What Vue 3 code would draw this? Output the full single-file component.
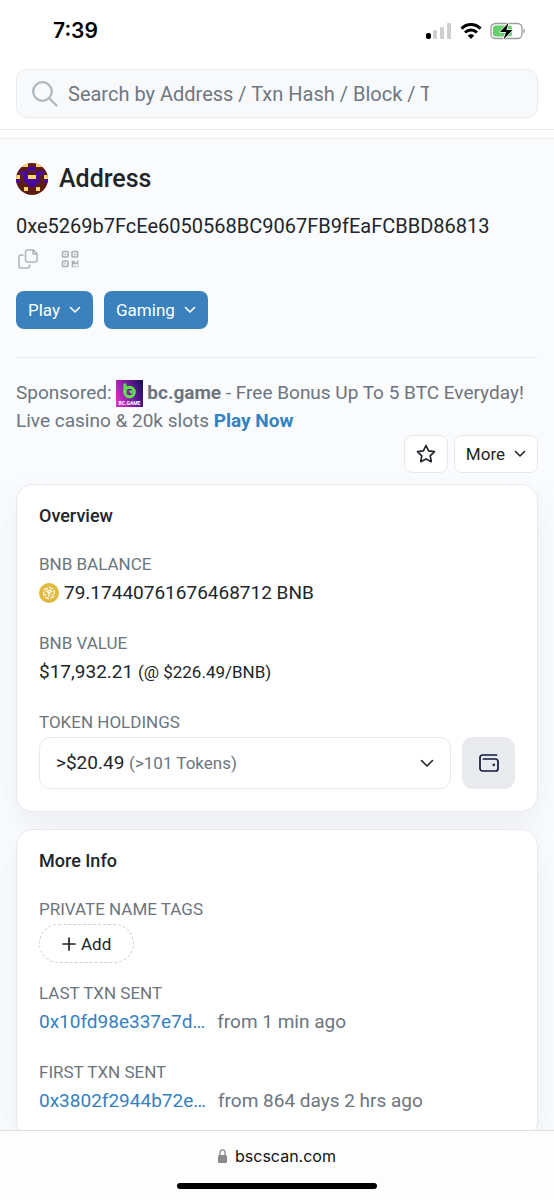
<script setup>
import { ref } from 'vue'

const query = ref('')
const tags = ['Play', 'Gaming']
const transactions = [
  { label: 'Last Txn Sent', hash: '0x10fd98e337e7d…', age: 'from 1 min ago' },
  { label: 'First Txn Sent', hash: '0x3802f2944b72e…', age: 'from 864 days 2 hrs ago' }
]

// 8x8 identicon: Y = yellow, P = purple, anything else is the brown ground
const rows = ['bYYbbYYb', 'bbbPPbbb', 'bPPbbPPb', 'YbPYYPbY', 'PbPPPPbP', 'bbbPPbbb', 'bbYbbYbb', 'bbbbbbbb']
const cells = rows.flatMap((row, y) =>
  [...row].map((c, x) => ({ c, x, y })).filter((cell) => cell.c !== 'b')
)
</script>

<template>
  <div class="screen">
    <header class="status">
      <time class="clock">7:39</time>
      <div class="indicators">
        <svg width="26" height="16" viewBox="0 0 26 16" aria-hidden="true">
          <rect x="0" y="10" width="5" height="6" rx="2" fill="#000" />
          <rect x="7" y="7" width="4" height="9" rx="1" fill="#cfcfcf" />
          <rect x="14" y="4" width="4" height="12" rx="1" fill="#cfcfcf" />
          <rect x="21" y="0" width="4" height="16" rx="1" fill="#cfcfcf" />
        </svg>
        <svg width="22" height="16" viewBox="0 0 22 16" aria-hidden="true">
          <g fill="none" stroke="#000" stroke-width="3">
            <path d="M1.500 5.600C7 .2 15 .2 20.500 5.600" />
            <path d="M5 9.500c3.500-3.300 8.500-3.300 12 0" />
          </g>
          <path d="M11 16l-3.300-3.400c1.900-1.700 4.700-1.700 6.600 0z" fill="#000" />
        </svg>
        <svg width="36" height="18" viewBox="0 0 36 18" aria-hidden="true">
          <rect x="1" y="1.500" width="31" height="15" rx="4.500" fill="#fff" stroke="#9c9c9c" stroke-width="1.300" />
          <rect x="3" y="3.500" width="19" height="11" rx="2.500" fill="#65cf6b" />
          <path d="M33.500 6.500c1.800.700 1.800 4.300 0 5z" fill="#8f8f8f" />
          <path d="M18.500 .8L10 10h6l-2.500 7.500L22.500 8h-6z" fill="#000" stroke="#fff" stroke-width="1.500" paint-order="stroke" stroke-linejoin="round" />
        </svg>
      </div>
    </header>

    <form class="search" role="search" @submit.prevent>
      <label class="search-box">
        <svg width="26" height="26" viewBox="0 0 26 26" fill="none" stroke="#adb5bd" stroke-width="2.200" stroke-linecap="round" aria-hidden="true">
          <circle cx="10.500" cy="10.500" r="9.300" />
          <path d="M17.500 17.500l7 7" />
        </svg>
        <input v-model="query" type="text" aria-label="Search" placeholder="Search by Address / Txn Hash / Block / Token" />
      </label>
    </form>

    <main class="page">
      <section class="intro">
        <div class="heading">
          <svg class="avatar" width="32" height="32" viewBox="0 0 8 8" shape-rendering="crispEdges" aria-hidden="true">
            <rect width="8" height="8" fill="#5e1c10" />
            <rect v-for="cell in cells" :key="`${cell.x}-${cell.y}`" :x="cell.x" :y="cell.y" width="1" height="1" :fill="cell.c === 'Y' ? '#f6d86b' : '#4a079e'" />
          </svg>
          <h1>Address</h1>
        </div>
        <p class="hash">0xe5269b7FcEe6050568BC9067FB9fEaFCBBD86813</p>
        <div class="tools">
          <button type="button" aria-label="Copy address">
            <svg width="20" height="20" viewBox="0 0 20 20" fill="none" stroke="#adb5bd" stroke-width="1.500" stroke-linejoin="round" stroke-linecap="round">
              <path d="M9.500 1h6L19 4.500V11a2 2 0 0 1-2 2H9.500a2 2 0 0 1-2-2V3a2 2 0 0 1 2-2zM15 1.200V5h3.800" />
              <path d="M5 6H3a2 2 0 0 0-2 2v9a2 2 0 0 0 2 2h6.500a2 2 0 0 0 2-2v-1" />
            </svg>
          </button>
          <button type="button" aria-label="View QR code">
            <svg width="18" height="18" viewBox="0 0 18 18" fill="none" stroke="#a9b0b8" stroke-width="1.700">
              <rect x="1.500" y="1.500" width="5.500" height="5.500" rx="1" />
              <rect x="11" y="1.500" width="5.500" height="5.500" rx="1" />
              <rect x="1.500" y="11" width="5.500" height="5.500" rx="1" />
              <path d="M3.500 4.300h1.500M13 4.300h1.500M3.500 13.700h1.500M11.500 17.500v-7M13 11v3M13 13.500h3M16.500 10.500v4M13.500 16.500h1.500M16 16.500h1.500" />
            </svg>
          </button>
        </div>
        <div class="tags">
          <button v-for="tag in tags" :key="tag" type="button" class="tag">
            {{ tag }}
            <svg class="chevron" width="12" height="8" viewBox="0 0 12 8"><path d="M1.500 1.500L6 6l4.500-4.500" /></svg>
          </button>
        </div>
      </section>

      <p class="sponsor">
        <span>Sponsored: </span>
        <svg class="ad" width="27" height="27" viewBox="0 0 27 27" aria-hidden="true">
          <defs>
            <linearGradient id="adGround" x1="0" y1=".6" x2="1" y2=".2">
              <stop offset="0" stop-color="#d52cc4" />
              <stop offset=".55" stop-color="#6d1a9c" />
              <stop offset="1" stop-color="#1c1160" />
            </linearGradient>
          </defs>
          <rect width="27" height="27" fill="url(#adGround)" />
          <path d="M9 3.500v9.500" stroke="#5fe04d" stroke-width="3" />
          <circle cx="13.500" cy="12" r="4.800" fill="none" stroke="#5fe04d" stroke-width="3" />
          <path d="M12.500 11.500l4-2v5z" fill="#5fe04d" />
          <text x="13.500" y="24.500" text-anchor="middle" class="ad-name">BC.GAME</text>
        </svg><b>bc.game</b>
        <span> - Free Bonus Up To 5 BTC Everyday! </span>
        <span>Live casino &amp; 20k slots </span>
        <a href="#play">Play Now</a>
      </p>

      <div class="actions">
        <button type="button" class="outline" aria-label="Add to favourites">
          <svg width="20" height="20" viewBox="0 0 20 20" fill="none" stroke="#212529" stroke-width="1.700" stroke-linejoin="round">
            <path d="M10 1.500l2.600 5.400 5.900.800-4.300 4.100 1.100 5.900L10 14.900l-5.300 2.800 1.100-5.900L1.500 7.700l5.900-.800z" />
          </svg>
        </button>
        <button type="button" class="outline">
          More
          <svg class="chevron" width="12" height="8" viewBox="0 0 12 8"><path d="M1.500 1.500L6 6l4.500-4.500" /></svg>
        </button>
      </div>

      <section class="card">
        <h2>Overview</h2>
        <div class="field">
          <h3>BNB Balance</h3>
          <p class="balance">
            <svg width="20" height="20" viewBox="0 0 20 20" aria-hidden="true">
              <circle cx="10" cy="10" r="10" fill="#e2b83f" />
              <g fill="none" stroke="#fff" stroke-width="1.200" stroke-linejoin="round">
                <path d="M10 4l5.200 3v6L10 16l-5.200-3V7z" stroke-dasharray="4.500 1.500" />
                <path d="M6.800 8L10 9.900 13.200 8M10 9.900v4M8 6.800l2 1.200 2-1.200M7 11v1.300M13 11v1.300" />
              </g>
            </svg>
            79.17440761676468712 BNB
          </p>
        </div>
        <div class="field">
          <h3>BNB Value</h3>
          <p>$17,932.21 <span class="rate">(@ $226.49/BNB)</span></p>
        </div>
        <div class="field">
          <h3>Token Holdings</h3>
          <div class="holdings">
            <button type="button" class="picker">
              <span>&gt;$20.49 <small>(&gt;101 Tokens)</small></span>
              <svg class="chevron" width="14" height="9" viewBox="0 0 14 9"><path d="M1.500 1.500L7 7l5.500-5.500" /></svg>
            </button>
            <button type="button" class="wallet" aria-label="Open wallet">
              <svg width="20" height="18" viewBox="0 0 20 18" fill="none" stroke="#0f1a38" stroke-width="1.700" stroke-linecap="round" stroke-linejoin="round">
                <path d="M17.500 1H3.500A2.500 2.500 0 0 0 1 3.500v11A2.500 2.500 0 0 0 3.500 17h13a2.500 2.500 0 0 0 2.500-2.500v-7A2.500 2.500 0 0 0 16.500 5H4.500" />
                <circle cx="14.800" cy="10.800" r=".5" />
              </svg>
            </button>
          </div>
        </div>
      </section>

      <section class="card">
        <h2>More Info</h2>
        <div class="field compact">
          <h3>Private Name Tags</h3>
          <button type="button" class="add">
            <svg width="14" height="14" viewBox="0 0 14 14" fill="none" stroke="#212529" stroke-width="1.700" stroke-linecap="round"><path d="M7 1v12M1 7h12" /></svg>
            Add
          </button>
        </div>
        <div v-for="txn in transactions" :key="txn.label" class="field">
          <h3>{{ txn.label }}</h3>
          <p class="txn"><a href="#txn">{{ txn.hash }}</a><span>{{ txn.age }}</span></p>
        </div>
      </section>
    </main>

    <footer class="browser">
      <div class="site">
        <svg width="9" height="14" viewBox="0 0 9 14" aria-hidden="true">
          <path d="M2 7V3.500a2.500 2.700 0 0 1 5 0V7" fill="none" stroke="#8a8a8a" stroke-width="1.300" />
          <rect y="6" width="9" height="8" rx="1.500" fill="#8a8a8a" />
        </svg>
        bscscan.com
      </div>
      <div class="home"></div>
    </footer>
  </div>
</template>

<style>
body { margin: 0; }
</style>

<style scoped>
* { box-sizing: border-box; }
h1, h2, h3, p { margin: 0; font-weight: 400; }
svg { flex: none; }
button { font: inherit; color: inherit; margin: 0; padding: 0; border: 0; background: none; cursor: pointer; }
a { color: #3481bf; text-decoration: none; }

.screen {
  display: flex;
  flex-direction: column;
  height: 100vh;
  overflow: hidden;
  background: #fff;
  color: #212529;
  font: 19px/28px Roboto, sans-serif;
}

.status {
  flex: none;
  display: flex;
  align-items: center;
  justify-content: space-between;
  height: 61px;
  padding: 0 28px 0 53px;
}
.clock { color: #000; font: 600 21px/24px Inter, sans-serif; }
.indicators { display: flex; align-items: center; gap: 8px; }

.search { flex: none; padding: 8px 16px 11px; border-bottom: 1px solid #e9e6ec; }
.search-box {
  display: flex;
  align-items: center;
  gap: 10px;
  height: 49px;
  padding: 0 108px 0 15px;
  border: 1px solid #e9ecef;
  border-radius: 11px;
  background: #f8f9fa;
}
.search-box input {
  flex: 1;
  min-width: 0;
  padding: 0;
  border: 0;
  outline: 0;
  background: none;
  color: #212529;
  font: 20px/28px Roboto, sans-serif;
}
.search-box input::placeholder { color: #6f777f; opacity: 1; }

.page {
  flex: 1;
  min-height: 0;
  overflow: hidden;
  margin-top: 8px;
  padding: 0 16px;
  border-top: 1px solid #eceef1;
  background: #fafbfd;
}

.intro { padding: 24px 0 28px; border-bottom: 1px solid #e9ecef; }
.heading { display: flex; align-items: center; gap: 11px; }
.avatar { border-radius: 50%; }
h1 { font-size: 25px; line-height: 32px; font-weight: 500; }
.hash { margin-top: 17px; font-size: 20px; overflow-wrap: anywhere; }
.tools { display: flex; gap: 23px; margin: 9px 0 0 2px; }
.tools button { display: flex; align-items: center; height: 20px; }
.tags { display: flex; gap: 11px; margin-top: 22px; }
.tag {
  display: flex;
  align-items: center;
  gap: 9px;
  height: 38px;
  padding: 0 12px;
  border-radius: 8px;
  background: #3a81bd;
  color: #fff;
  font-size: 17px;
}
.chevron { fill: none; stroke: currentColor; stroke-width: 1.6; stroke-linecap: round; stroke-linejoin: round; }

.sponsor { margin-top: 21px; color: #6c757d; }
.sponsor b, .sponsor a { font-weight: 700; }
.ad { height: 27px; margin: -4px 4px -4px 0; vertical-align: middle; }
.ad-name { fill: #fff; font: 700 5px Roboto, sans-serif; }

.actions { display: flex; justify-content: flex-end; gap: 6px; }
.outline {
  display: flex;
  align-items: center;
  gap: 9px;
  height: 38px;
  padding: 0 11px;
  border: 1px solid #e6e8eb;
  border-radius: 8px;
  background: #fff;
  font-size: 17px;
}

.card {
  margin-top: 11px;
  padding: 17px 22px 22px;
  border: 1px solid #e7eaed;
  border-radius: 17px;
  background: #fff;
  box-shadow: 0 11px 26px rgba(189, 197, 209, .22);
}
.card + .card { margin-top: 17px; }
h2 { font-size: 18px; line-height: 28px; font-weight: 500; }
.field { margin-top: 24px; }
h2 + .field { margin-top: 23px; }
h3 { color: #6c757d; font-size: 17px; line-height: 22px; text-transform: uppercase; }
.field p { margin-top: 3px; line-height: 30px; }
.balance { display: flex; align-items: center; gap: 5px; }
.rate { font-size: 17px; }
.holdings { display: flex; gap: 11px; margin-top: 4px; }
.picker {
  flex: 1;
  display: flex;
  align-items: center;
  justify-content: space-between;
  height: 52px;
  padding: 0 16px;
  border: 1px solid #e7eaed;
  border-radius: 11px;
}
.picker small { color: #6c757d; font-size: 17px; }
.wallet {
  display: flex;
  align-items: center;
  justify-content: center;
  width: 53px;
  border-radius: 11px;
  background: #e9eaee;
}
.add {
  display: flex;
  align-items: center;
  gap: 5px;
  height: 39px;
  margin-top: 4px;
  padding: 0 22px;
  border: 1px dashed #cdd1d5;
  border-radius: 20px;
  font-size: 17px;
}
.compact + .field { margin-top: 19px; }
.txn { display: flex; gap: 12px; }
.txn span { color: #6c757d; }

.browser {
  flex: none;
  display: flex;
  flex-direction: column;
  align-items: center;
  gap: 14px;
  height: 70px;
  padding-top: 12px;
  border-top: 1px solid #dcdfe3;
  background: #fdfdfe;
}
.site { display: flex; align-items: center; gap: 8px; color: #111; font: 16px/26px Inter, sans-serif; }
.home { width: 36%; height: 6px; border-radius: 3px; background: #000; }
</style>
